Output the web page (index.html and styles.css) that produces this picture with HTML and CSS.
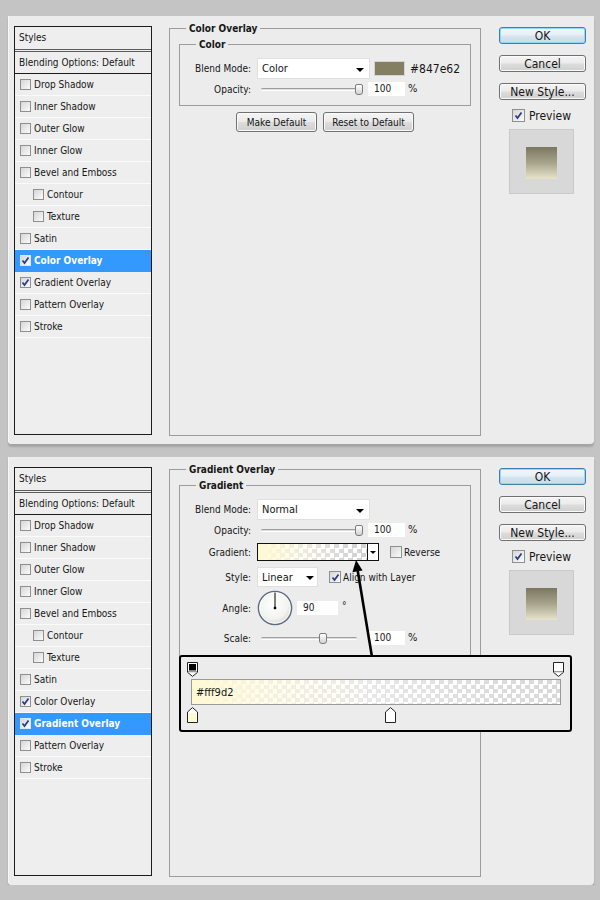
FILE: index.html
```html
<!DOCTYPE html>
<html lang="en">
<head>
    <meta charset="UTF-8">
    <title>Layer Style</title>
    <link rel="stylesheet" href="styles.css">
</head>
<body>
<div class="page">

    <!-- Color Overlay -->
    <div class="dialog">
        <div class="style-list">
            <div class="list-head">Styles</div>
            <div class="list-blend">Blending Options: Default</div>
            <div class="list-item"><span class="cb"></span>Drop Shadow</div>
            <div class="list-item"><span class="cb"></span>Inner Shadow</div>
            <div class="list-item"><span class="cb"></span>Outer Glow</div>
            <div class="list-item"><span class="cb"></span>Inner Glow</div>
            <div class="list-item"><span class="cb"></span>Bevel and Emboss</div>
            <div class="list-item sub"><span class="cb"></span>Contour</div>
            <div class="list-item sub"><span class="cb"></span>Texture</div>
            <div class="list-item"><span class="cb"></span>Satin</div>
            <div class="list-item active"><span class="cb"><svg viewBox="0 0 9 9"><path d="M1.5 4.5l2 2.6 4-5.6"/></svg></span>Color Overlay</div>
            <div class="list-item"><span class="cb"><svg viewBox="0 0 9 9"><path d="M1.5 4.5l2 2.6 4-5.6"/></svg></span>Gradient Overlay</div>
            <div class="list-item"><span class="cb"></span>Pattern Overlay</div>
            <div class="list-item"><span class="cb"></span>Stroke</div>
        </div>

        <fieldset class="effect">
            <legend>Color Overlay</legend>
            <fieldset class="group">
                <legend>Color</legend>
                <div class="row">
                    <span class="label">Blend Mode:</span>
                    <div class="select"><span>Color</span><i class="caret"></i></div>
                    <span class="swatch"></span>
                    <span class="hex">#847e62</span>
                </div>
                <div class="row short">
                    <span class="label">Opacity:</span>
                    <div class="slider"><div class="track"></div><span class="thumb" style="left:98px"></span></div>
                    <span class="num">100</span>
                    <span class="unit">%</span>
                </div>
            </fieldset>
            <div class="actions">
                <button class="btn make">Make Default</button>
                <button class="btn reset">Reset to Default</button>
            </div>
        </fieldset>

        <div class="side">
            <button class="btn side-btn default">OK</button>
            <button class="btn side-btn">Cancel</button>
            <button class="btn side-btn">New Style...</button>
            <div class="preview-toggle"><span class="cb big"><svg viewBox="0 0 9 9"><path d="M1.5 4.5l2 2.6 4-5.6"/></svg></span>Preview</div>
            <div class="preview"><div class="preview-swatch"></div></div>
        </div>
    </div>

    <!-- Gradient Overlay -->
    <div class="dialog">
        <div class="style-list">
            <div class="list-head">Styles</div>
            <div class="list-blend">Blending Options: Default</div>
            <div class="list-item"><span class="cb"></span>Drop Shadow</div>
            <div class="list-item"><span class="cb"></span>Inner Shadow</div>
            <div class="list-item"><span class="cb"></span>Outer Glow</div>
            <div class="list-item"><span class="cb"></span>Inner Glow</div>
            <div class="list-item"><span class="cb"></span>Bevel and Emboss</div>
            <div class="list-item sub"><span class="cb"></span>Contour</div>
            <div class="list-item sub"><span class="cb"></span>Texture</div>
            <div class="list-item"><span class="cb"></span>Satin</div>
            <div class="list-item"><span class="cb"><svg viewBox="0 0 9 9"><path d="M1.5 4.5l2 2.6 4-5.6"/></svg></span>Color Overlay</div>
            <div class="list-item active"><span class="cb"><svg viewBox="0 0 9 9"><path d="M1.5 4.5l2 2.6 4-5.6"/></svg></span>Gradient Overlay</div>
            <div class="list-item"><span class="cb"></span>Pattern Overlay</div>
            <div class="list-item"><span class="cb"></span>Stroke</div>
        </div>

        <fieldset class="effect">
            <legend>Gradient Overlay</legend>
            <fieldset class="group tall">
                <legend>Gradient</legend>
                <div class="row">
                    <span class="label">Blend Mode:</span>
                    <div class="select"><span>Normal</span><i class="caret"></i></div>
                </div>
                <div class="row short">
                    <span class="label">Opacity:</span>
                    <div class="slider"><div class="track"></div><span class="thumb" style="left:98px"></span></div>
                    <span class="num">100</span>
                    <span class="unit">%</span>
                </div>
                <div class="row spaced">
                    <span class="label">Gradient:</span>
                    <div class="grad-field">
                        <div class="grad-fill"></div>
                        <div class="grad-drop"><i class="caret small"></i></div>
                    </div>
                    <div class="check-label"><span class="cb"></span>Reverse</div>
                </div>
                <div class="row spaced">
                    <span class="label">Style:</span>
                    <div class="select narrow"><span>Linear</span><i class="caret"></i></div>
                    <div class="check-label"><span class="cb"><svg viewBox="0 0 9 9"><path d="M1.5 4.5l2 2.6 4-5.6"/></svg></span>Align with Layer</div>
                </div>
                <div class="row angle">
                    <span class="label">Angle:</span>
                    <svg class="dial" viewBox="0 0 36 36">
                        <defs>
                            <radialGradient id="dialFace" cx="45%" cy="40%" r="60%">
                                <stop offset="0" stop-color="#ffffff"/>
                                <stop offset="0.7" stop-color="#f3f3f1"/>
                                <stop offset="1" stop-color="#d9d9d6"/>
                            </radialGradient>
                        </defs>
                        <circle cx="18" cy="18" r="16.6" fill="url(#dialFace)" stroke="#5f6b86" stroke-width="1.4"/>
                        <circle cx="18" cy="18" r="15.2" fill="none" stroke="#ffffff" stroke-width="0.8"/>
                        <line x1="18" y1="18" x2="18" y2="2.5" stroke="#000" stroke-width="1"/>
                        <rect x="16.8" y="16.8" width="2.4" height="2.4" fill="#000"/>
                    </svg>
                    <span class="num deg-input">90</span>
                    <span class="deg">°</span>
                </div>
                <div class="row short scale">
                    <span class="label">Scale:</span>
                    <div class="slider"><div class="track"></div><span class="thumb" style="left:62px"></span></div>
                    <span class="num">100</span>
                    <span class="unit">%</span>
                </div>
            </fieldset>
            <div class="actions">
                <button class="btn make">Make Default</button>
                <button class="btn reset">Reset to Default</button>
            </div>
        </fieldset>

        <div class="side">
            <button class="btn side-btn default">OK</button>
            <button class="btn side-btn">Cancel</button>
            <button class="btn side-btn">New Style...</button>
            <div class="preview-toggle"><span class="cb big"><svg viewBox="0 0 9 9"><path d="M1.5 4.5l2 2.6 4-5.6"/></svg></span>Preview</div>
            <div class="preview"><div class="preview-swatch"></div></div>
        </div>

        <!-- callout from the gradient field down to the editor -->
        <svg class="pointer" viewBox="0 0 30 100">
            <line x1="9.6" y1="13" x2="24" y2="100" stroke="#000" stroke-width="2.6"/>
            <polygon points="8,3 14.6,13.6 4.4,15.2" fill="#000"/>
        </svg>

        <div class="gradient-editor">
            <div class="stops">
                <span class="stop" style="left:0%">
                    <svg viewBox="0 0 11 15"><path d="M0.5 0.5H10.5V10.3L5.5 14.4L0.5 10.3Z" fill="#fff" stroke="#222"/><rect x="2" y="2" width="7" height="6.5" fill="#000"/><rect x="1" y="9" width="9" height="1.3" fill="#9a9a9a"/></svg>
                </span>
                <span class="stop" style="left:99%">
                    <svg viewBox="0 0 11 15"><path d="M0.5 0.5H10.5V10.3L5.5 14.4L0.5 10.3Z" fill="#fff" stroke="#222"/><rect x="1" y="9" width="9" height="1.3" fill="#9a9a9a"/></svg>
                </span>
            </div>
            <div class="grad-bar">#fff9d2</div>
            <div class="stops lower">
                <span class="stop" style="left:0%">
                    <svg viewBox="0 0 11 16"><path d="M5.5 0.6L10.5 5V15.5H0.5V5Z" fill="#fff" stroke="#222"/><rect x="1.6" y="6" width="7.8" height="8.6" fill="#fff9d2"/></svg>
                </span>
                <span class="stop" style="left:53.6%">
                    <svg viewBox="0 0 11 16"><path d="M5.5 0.6L10.5 5V15.5H0.5V5Z" fill="#fff" stroke="#222"/><rect x="1.6" y="6" width="7.8" height="8.6" fill="#fff"/></svg>
                </span>
            </div>
        </div>
    </div>

</div>
</body>
</html>
```

FILE: styles.css
```css
* {
    box-sizing: border-box;
}

body {
    margin: 0;
    background: #c4c4c4;
    font-family: "DejaVu Sans Condensed", "Liberation Sans", sans-serif;
    font-size: 10px;
    color: #161616;
}

.page {
    display: flex;
    flex-direction: column;
    gap: 13px;
    padding: 16px 0 0 8px;
}

.dialog {
    position: relative;
    display: flex;
    align-items: flex-start;
    width: 586px;
    height: 428px;
    padding: 10px 8px 0 6px;
    background: #ececec;
    border-radius: 0 0 4px 4px;
    box-shadow: 0 3px 2px rgba(0, 0, 0, 0.16), inset 1px 0 0 #f7f7f7;
}

/* ---- style list ---- */

.style-list {
    flex: none;
    width: 138px;
    height: 409px;
    border: 1px solid #1c1c1c;
    background: #eeeeee;
}

.list-head {
    height: 25px;
    padding-left: 4px;
    line-height: 22px;
    border-bottom: 3px double #5c5c5c;
}

.list-blend {
    height: 22px;
    padding-left: 4px;
    line-height: 21px;
    border-bottom: 1px solid #1c1c1c;
}

.list-item {
    display: flex;
    align-items: center;
    height: 22px;
    padding-left: 5px;
    border-bottom: 1px solid #fbfbfb;
}

.list-item.sub {
    padding-left: 18px;
}

.list-item.active {
    background: #3399ff;
    color: #fff;
    font-weight: bold;
    border-bottom-color: #3399ff;
}

.cb {
    display: inline-flex;
    align-items: center;
    justify-content: center;
    flex: none;
    width: 11px;
    height: 11px;
    margin-right: 3px;
    border: 1px solid #8e8f8f;
    background: linear-gradient(135deg, #d6d6d6, #fbfbfb);
}

.cb.big {
    width: 13px;
    height: 13px;
}

.cb svg {
    width: 9px;
    height: 9px;
    fill: none;
    stroke: #2b3a85;
    stroke-width: 1.7;
}

.active .cb {
    border-color: #d8e6f5;
}

/* ---- effect settings ---- */

.effect {
    flex: none;
    width: 312px;
    height: 414px;
    min-width: 0;
    margin: -4px 0 0 17px;
    padding: 0 9px;
    border: 1px solid #9c9c9c;
}

.effect > legend {
    margin-left: 7px;
    padding: 0 3px;
    font-weight: bold;
    line-height: 13px;
}

.group {
    min-width: 0;
    margin: 3px 0 0;
    padding: 7px 0 9px;
    border: 1px solid #9c9c9c;
}

.group.tall {
    padding-bottom: 12px;
}

.group > legend {
    margin-left: 16px;
    padding: 0 3px;
    font-weight: bold;
    line-height: 13px;
}

.row {
    display: flex;
    align-items: center;
    height: 21px;
}

.row.short {
    height: 14px;
    margin-top: 3px;
}

.row.spaced {
    height: 20px;
    margin-top: 5px;
}

.row.angle {
    height: 36px;
    margin-top: 3px;
}

.row.scale {
    margin-top: 5px;
}

.label {
    flex: none;
    width: 71px;
    margin-right: 6px;
    text-align: right;
}

.select {
    display: flex;
    align-items: center;
    justify-content: space-between;
    width: 113px;
    height: 21px;
    padding: 0 5px 0 4px;
    background: #fff;
    border: 1px solid #e0e0e0;
    font-size: 11px;
}

.select.narrow {
    width: 61px;
    height: 20px;
    padding-right: 3px;
}

.caret {
    display: block;
    width: 0;
    height: 0;
    margin-top: 2px;
    border-left: 4px solid transparent;
    border-right: 4px solid transparent;
    border-top: 4px solid #000;
}

.caret.small {
    margin-top: 1px;
    border-left-width: 3px;
    border-right-width: 3px;
    border-top-width: 3px;
}

.swatch {
    width: 31px;
    height: 15px;
    margin-left: 4px;
    background: #847e62;
    border: 1px solid #d4d4d0;
}

.hex {
    margin-left: 5px;
    font-size: 12px;
}

.slider {
    position: relative;
    display: flex;
    align-items: center;
    flex: none;
    width: 105px;
    height: 14px;
    margin-right: 6px;
}

.track {
    width: 96px;
    height: 3px;
    margin-left: 4px;
    border-top: 1px solid #9d9d9d;
    border-bottom: 1px solid #ffffff;
    border-radius: 2px;
    background: #dedede;
}

.thumb {
    position: absolute;
    top: 2px;
    width: 8px;
    height: 11px;
    border: 1px solid #7b7b7b;
    border-radius: 2px 2px 3px 3px;
    background: linear-gradient(#fefefe, #d3d3d3);
}

.num {
    flex: none;
    width: 37px;
    height: 14px;
    padding-left: 6px;
    line-height: 14px;
    background: #fff;
}

.unit {
    margin-left: 3px;
    font-size: 11px;
    margin-bottom: 2px;
}

.grad-field {
    display: flex;
    width: 122px;
    height: 18px;
    border: 1px solid #111;
}

.grad-fill {
    flex: 1;
    background:
        linear-gradient(to right, #fff9d2, rgba(255, 252, 232, 0.6) 40%, rgba(255, 255, 255, 0.15) 75%, rgba(255, 255, 255, 0)),
        repeating-conic-gradient(#d2d2d2 0 25%, #ffffff 0 50%) 0 0 / 9px 9px;
}

.grad-drop {
    display: flex;
    align-items: center;
    justify-content: center;
    width: 11px;
    border-left: 1px solid #111;
    background: #fff;
}

.check-label {
    display: flex;
    align-items: center;
    margin-left: 11px;
}

.check-label .cb {
    width: 12px;
    height: 12px;
    margin-right: 2px;
}

.dial {
    flex: none;
    width: 36px;
    height: 36px;
}

.deg-input {
    width: 41px;
    margin-left: 4px;
}

.deg {
    margin-left: 4px;
    margin-bottom: 6px;
}

.actions {
    display: flex;
    justify-content: center;
    gap: 6px;
    margin-top: 6px;
}

.btn {
    display: flex;
    align-items: center;
    justify-content: center;
    height: 20px;
    padding: 0;
    border: 1px solid #707070;
    border-radius: 3px;
    background: linear-gradient(#f4f4f4 0%, #ebebeb 48%, #dddddd 52%, #cfcfcf 100%);
    box-shadow: inset 0 0 0 1px #fbfbfb;
    font-family: inherit;
    font-size: 10px;
    color: #161616;
}

.btn.make {
    width: 81px;
}

.btn.reset {
    width: 91px;
}

/* ---- right column ---- */

.side {
    display: flex;
    flex-direction: column;
    flex: none;
    width: 87px;
    margin-left: 18px;
    padding-top: 1px;
}

.side-btn {
    height: 17px;
    margin-bottom: 11px;
    font-size: 12px;
}

.side-btn:nth-child(3) {
    margin-bottom: 9px;
}

.side-btn.default {
    border-color: #3c7fb1;
    box-shadow: inset 0 0 0 1px #8fd9f8;
    background: linear-gradient(#f3f8fb 0%, #e6f0f6 48%, #d5e6f0 52%, #c9dbe6 100%);
}

.preview-toggle {
    display: flex;
    align-items: center;
    height: 13px;
    margin-left: 13px;
    font-size: 12px;
}

.preview-toggle .cb {
    margin-right: 4px;
}

.preview {
    display: flex;
    align-items: center;
    justify-content: center;
    width: 65px;
    height: 65px;
    margin: 7px 0 0 10px;
    padding-top: 2px;
    background: #d8d8d8;
    border: 1px solid #cacaca;
}

.preview-swatch {
    width: 31px;
    height: 32px;
    background: linear-gradient(#7b7660, #a9a58c 50%, #e8e4cb);
}

/* ---- gradient editor callout ---- */

.pointer {
    position: absolute;
    left: 340px;
    top: 100px;
    width: 30px;
    height: 100px;
}

.gradient-editor {
    position: absolute;
    left: 171px;
    top: 198px;
    width: 393px;
    height: 77px;
    padding: 5px 9px 0 10px;
    border: 2px solid #000;
    border-radius: 3px;
    background: #ececec;
}

.stops {
    position: relative;
    height: 15px;
}

.stops.lower {
    height: 16px;
    margin-top: 2px;
}

.stop {
    position: absolute;
    top: 0;
    width: 11px;
    margin-left: -4px;
}

.stop svg {
    display: block;
    width: 11px;
}

.grad-bar {
    display: flex;
    align-items: center;
    height: 26px;
    margin-top: 2px;
    padding-left: 4px;
    border: 1px solid #9a9a9a;
    font-size: 11px;
    background:
        linear-gradient(to right, #fff9d2, rgba(255, 251, 228, 0.75) 20%, rgba(255, 255, 255, 0.45) 50%, rgba(255, 255, 255, 0.2) 80%, rgba(255, 255, 255, 0.1)),
        repeating-conic-gradient(#d4d4d4 0 25%, #ffffff 0 50%) 0 0 / 9px 9px;
}
```
